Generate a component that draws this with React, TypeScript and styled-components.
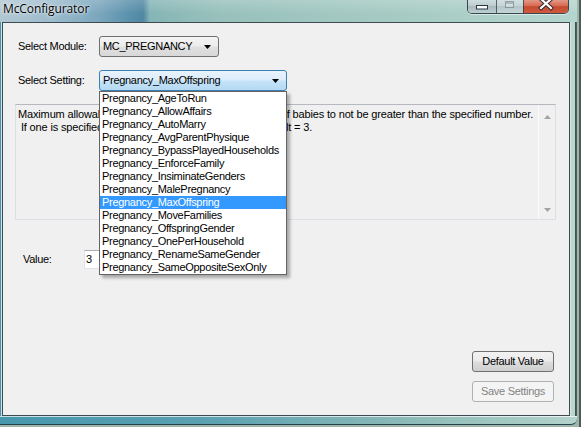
import React from 'react';
import styled, { createGlobalStyle, css } from 'styled-components';

const GlobalStyle = createGlobalStyle`
  html, body { margin: 0; padding: 0; width: 581px; height: 427px; overflow: hidden; }
  body { background: #93aa9e; }
  #root { width: 581px; height: 427px; }
  * { box-sizing: border-box; }
`;

const UI_FONT = `"Liberation Sans", Arial, sans-serif`;

const Desktop = styled.div`
  width: 581px;
  height: 427px;
  display: flex;
  background: linear-gradient(90deg, #9fb5aa 0, #9fb5aa 579px, #4d5c55 579px);
`;

const Window = styled.div`
  width: 577px;
  height: 425px;
  display: flex;
  flex-direction: column;
`;

const TitleBar = styled.div`
  height: 22px;
  display: flex;
  align-items: flex-start;
  padding-left: 3px;
  padding-right: 8px;
  background:
    linear-gradient(180deg, rgba(255,255,255,0.18) 0, rgba(255,255,255,0) 14px),
    linear-gradient(90deg, #b2c8d3 0, #9dbccd 50px, #7aa6bd 100px, #5a90ab 130px, #4f87a3 143px, #85b5b6 150px, #98c1bc 220px, #a6cbc3 400px, #b4d5cd 100%);
`;

const Title = styled.div`
  font-family: "Open Sans", "Noto Sans", sans-serif;
  font-size: 12px;
  line-height: 17px;
  color: #000;
  text-shadow: 0 0 5px rgba(255,255,255,0.9), 0 0 2px rgba(255,255,255,0.8);
  letter-spacing: -0.1px;
`;

const Spacer = styled.div`
  flex: 1;
`;

const CaptionGroup = styled.div`
  display: flex;
  height: 14px;
  border: 1px solid rgba(35, 48, 58, 0.85);
  border-top: none;
  border-radius: 0 0 5px 5px;
  overflow: hidden;
  box-shadow: 0 1px 0 rgba(255,255,255,0.5);
`;

type CapKind = 'min' | 'max' | 'close';

const CaptionButton = styled.div<{ $kind: CapKind }>`
  height: 13px;
  display: flex;
  align-items: flex-start;
  justify-content: center;
  ${({ $kind }) =>
    $kind === 'min' &&
    css`
      width: 28px;
      background: linear-gradient(180deg, #d0dde0 0, #bccbcf 45%, #a8babe 50%, #bccfd1 100%);
    `}
  ${({ $kind }) =>
    $kind === 'max' &&
    css`
      width: 27px;
      border-left: 1px solid rgba(35, 48, 58, 0.7);
      background: linear-gradient(180deg, #d3e0e1 0, #c4d3d5 45%, #b4c6c8 50%, #c4d6d6 100%);
    `}
  ${({ $kind }) =>
    $kind === 'close' &&
    css`
      width: 45px;
      border-left: 1px solid rgba(35, 48, 58, 0.7);
      background: linear-gradient(180deg, #e29886 0, #d66a51 45%, #c44a30 52%, #d15a3e 100%);
    `}
`;

const Body = styled.div`
  flex: 1;
  display: flex;
  min-height: 0;
`;

const LeftFrame = styled.div`
  width: 2px;
  background: linear-gradient(90deg, #4b93a9 0, #4b93a9 1px, #cfe2e6 1px);
`;

const RightFrame = styled.div`
  width: 7px;
  background: linear-gradient(90deg, #e6f0ec 0, #bcd8d0 1px, #b6d5cc 5px, #3d4b47 5px, #56655f 7px);
`;

const BottomFrame = styled.div`
  height: 9px;
  border-bottom: 1px solid #23434f;
  border-radius: 0 0 6px 0;
  background:
    linear-gradient(180deg, rgba(255,255,255,0.7) 0, rgba(255,255,255,0.7) 1px, rgba(255,255,255,0) 1px),
    linear-gradient(90deg, #4797ad 0, #5aa0b1 200px, #8fbcb8 420px, #b3d3cb 100%);
`;

const Client = styled.div`
  width: 568px;
  border: 1px solid #3e4c52;
  background: #f0f0f0;
  display: flex;
  flex-direction: column;
  padding: 13px 13px 0 12px;
  font-family: ${UI_FONT};
  font-size: 11px;
  letter-spacing: -0.3px;
  color: #000;
`;

const FieldRow = styled.div<{ $gap?: number }>`
  display: flex;
  align-items: center;
  height: 21px;
  margin-top: ${({ $gap }) => $gap ?? 0}px;
`;

const Label = styled.div<{ $width: number; $indent: number }>`
  width: ${({ $width }) => $width}px;
  padding-left: ${({ $indent }) => $indent}px;
  line-height: 13px;
  white-space: nowrap;
`;

const ComboWrap = styled.div`
  position: relative;
`;

const Combo = styled.div<{ $width: number; $focused?: boolean }>`
  width: ${({ $width }) => $width}px;
  height: 21px;
  display: flex;
  align-items: center;
  padding: 0 7px 0 3px;
  border-radius: 3px;
  border: 1px solid #707070;
  background: linear-gradient(180deg, #f4f4f4 0, #ececec 48%, #e0e0e0 52%, #d8d8d8 100%);
  ${({ $focused }) =>
    $focused &&
    css`
      border-color: #3c7fb1;
      background: linear-gradient(180deg, #e8f3fc 0, #dcedfb 48%, #c5e3f8 52%, #b4d9f3 100%);
    `}
`;

const ComboText = styled.div`
  flex: 1;
  white-space: nowrap;
  overflow: hidden;
  line-height: 13px;
`;

const Arrow = styled.svg`
  width: 7px;
  height: 4px;
  flex: none;
`;

const DropList = styled.div`
  position: absolute;
  top: 100%;
  left: 0;
  width: 188px;
  border: 1px solid #646464;
  background: #fff;
  padding: 0;
  box-shadow: 3px 3px 3px rgba(0, 0, 0, 0.3);
  z-index: 10;
`;

const DropItem = styled.div<{ $selected?: boolean }>`
  height: 13px;
  line-height: 13px;
  padding-left: 2px;
  white-space: nowrap;
  overflow: hidden;
  color: ${({ $selected }) => ($selected ? '#fff' : '#000')};
  background: ${({ $selected }) => ($selected ? '#3399ff' : 'transparent')};
`;

const InfoBox = styled.div`
  margin-top: 13px;
  width: 541px;
  height: 116px;
  display: flex;
  border: 1px solid #dbdfe6;
  border-top-color: #b5b9bf;
  background: #f0f0f0;
`;

const InfoText = styled.div`
  flex: 1;
  padding: 3px 0 0 2px;
  line-height: 13px;
  letter-spacing: -0.15px;
  white-space: pre;
  overflow: hidden;
`;

const ScrollBar = styled.div`
  width: 17px;
  border-left: 1px solid #fbfbfb;
  display: flex;
  flex-direction: column;
  justify-content: space-between;
  align-items: center;
  padding: 10px 0 7px;
`;

const ScrollArrow = styled.svg`
  width: 7px;
  height: 4px;
`;

const ValueRow = styled.div`
  margin-top: 30px;
  display: flex;
  align-items: center;
  height: 19px;
`;

const ValueInput = styled.div`
  width: 60px;
  height: 19px;
  background: #fff;
  border: 1px solid #e2e3ea;
  border-top-color: #abadb3;
  padding-left: 1px;
  line-height: 17px;
`;

const ButtonColumn = styled.div`
  margin-top: 82px;
  align-self: flex-end;
  margin-right: 2px;
  display: flex;
  flex-direction: column;
  gap: 9px;
`;

const PushButton = styled.div<{ $disabled?: boolean }>`
  width: 82px;
  height: 21px;
  display: flex;
  align-items: center;
  justify-content: center;
  border-radius: 3px;
  line-height: 13px;
  border: 1px solid #707070;
  background: linear-gradient(180deg, #f2f2f2 0, #ebebeb 48%, #dddddd 52%, #cfcfcf 100%);
  color: #000;
  ${({ $disabled }) =>
    $disabled &&
    css`
      border-color: #adb2b5;
      background: #f4f4f4;
      color: #838383;
    `}
`;

const settings = [
  'Pregnancy_AgeToRun',
  'Pregnancy_AllowAffairs',
  'Pregnancy_AutoMarry',
  'Pregnancy_AvgParentPhysique',
  'Pregnancy_BypassPlayedHouseholds',
  'Pregnancy_EnforceFamily',
  'Pregnancy_InsiminateGenders',
  'Pregnancy_MalePregnancy',
  'Pregnancy_MaxOffspring',
  'Pregnancy_MoveFamilies',
  'Pregnancy_OffspringGender',
  'Pregnancy_OnePerHousehold',
  'Pregnancy_RenameSameGender',
  'Pregnancy_SameOppositeSexOnly',
];

const DownArrow = () => (
  <Arrow viewBox="0 0 7 4">
    <path d="M0 0 H7 L3.5 4 Z" fill="#000" />
  </Arrow>
);

const App: React.FC = () => {
  return (
    <>
      <GlobalStyle />
      <Desktop>
        <Window>
          <TitleBar>
            <Title>McConfigurator</Title>
            <Spacer />
            <CaptionGroup>
              <CaptionButton $kind="min">
                <svg width="28" height="13" viewBox="0 0 28 13">
                  <rect x="8.5" y="5.5" width="11" height="3.5" fill="#fff" stroke="#2b3844" strokeWidth="1" />
                </svg>
              </CaptionButton>
              <CaptionButton $kind="max">
                <svg width="26" height="13" viewBox="0 0 26 13">
                  <rect x="8.5" y="1.5" width="8" height="6" fill="rgba(255,255,255,0.25)" stroke="rgba(70,85,95,0.45)" strokeWidth="1" />
                  <rect x="9" y="2" width="7" height="2" fill="rgba(70,85,95,0.3)" />
                </svg>
              </CaptionButton>
              <CaptionButton $kind="close">
                <svg width="44" height="13" viewBox="0 0 44 13">
                  <path d="M17 -1 L27 8 M27 -1 L17 8" stroke="#3a2a2e" strokeWidth="4.2" strokeLinecap="square" />
                  <path d="M17 -1 L27 8 M27 -1 L17 8" stroke="#fff" strokeWidth="2.2" strokeLinecap="square" />
                </svg>
              </CaptionButton>
            </CaptionGroup>
          </TitleBar>
          <Body>
            <LeftFrame />
            <Client>
              <FieldRow>
                <Label $width={84} $indent={3}>Select Module:</Label>
                <Combo $width={120}>
                  <ComboText>MC_PREGNANCY</ComboText>
                  <DownArrow />
                </Combo>
              </FieldRow>
              <FieldRow $gap={13}>
                <Label $width={84} $indent={3}>Select Setting:</Label>
                <ComboWrap>
                  <Combo $width={188} $focused>
                    <ComboText>Pregnancy_MaxOffspring</ComboText>
                    <DownArrow />
                  </Combo>
                  <DropList>
                    {settings.map((s) => (
                      <DropItem key={s} $selected={s === 'Pregnancy_MaxOffspring'}>
                        {s}
                      </DropItem>
                    ))}
                  </DropList>
                </ComboWrap>
              </FieldRow>
              <InfoBox>
                <InfoText>
                  {'Maximum allowable offspring. Causes the total number of babies to not be greater than the specified number.\n If one is specified, only single births shall happen. Default = 3.'}
                </InfoText>
                <ScrollBar>
                  <ScrollArrow viewBox="0 0 7 4">
                    <path d="M3.5 0 L7 4 H0 Z" fill="#a3a3a3" />
                  </ScrollArrow>
                  <ScrollArrow viewBox="0 0 7 4">
                    <path d="M0 0 H7 L3.5 4 Z" fill="#a3a3a3" />
                  </ScrollArrow>
                </ScrollBar>
              </InfoBox>
              <ValueRow>
                <Label $width={69} $indent={8}>Value:</Label>
                <ValueInput>3</ValueInput>
              </ValueRow>
              <ButtonColumn>
                <PushButton>Default Value</PushButton>
                <PushButton $disabled>Save Settings</PushButton>
              </ButtonColumn>
            </Client>
            <RightFrame />
          </Body>
          <BottomFrame />
        </Window>
      </Desktop>
    </>
  );
};

export default App;
